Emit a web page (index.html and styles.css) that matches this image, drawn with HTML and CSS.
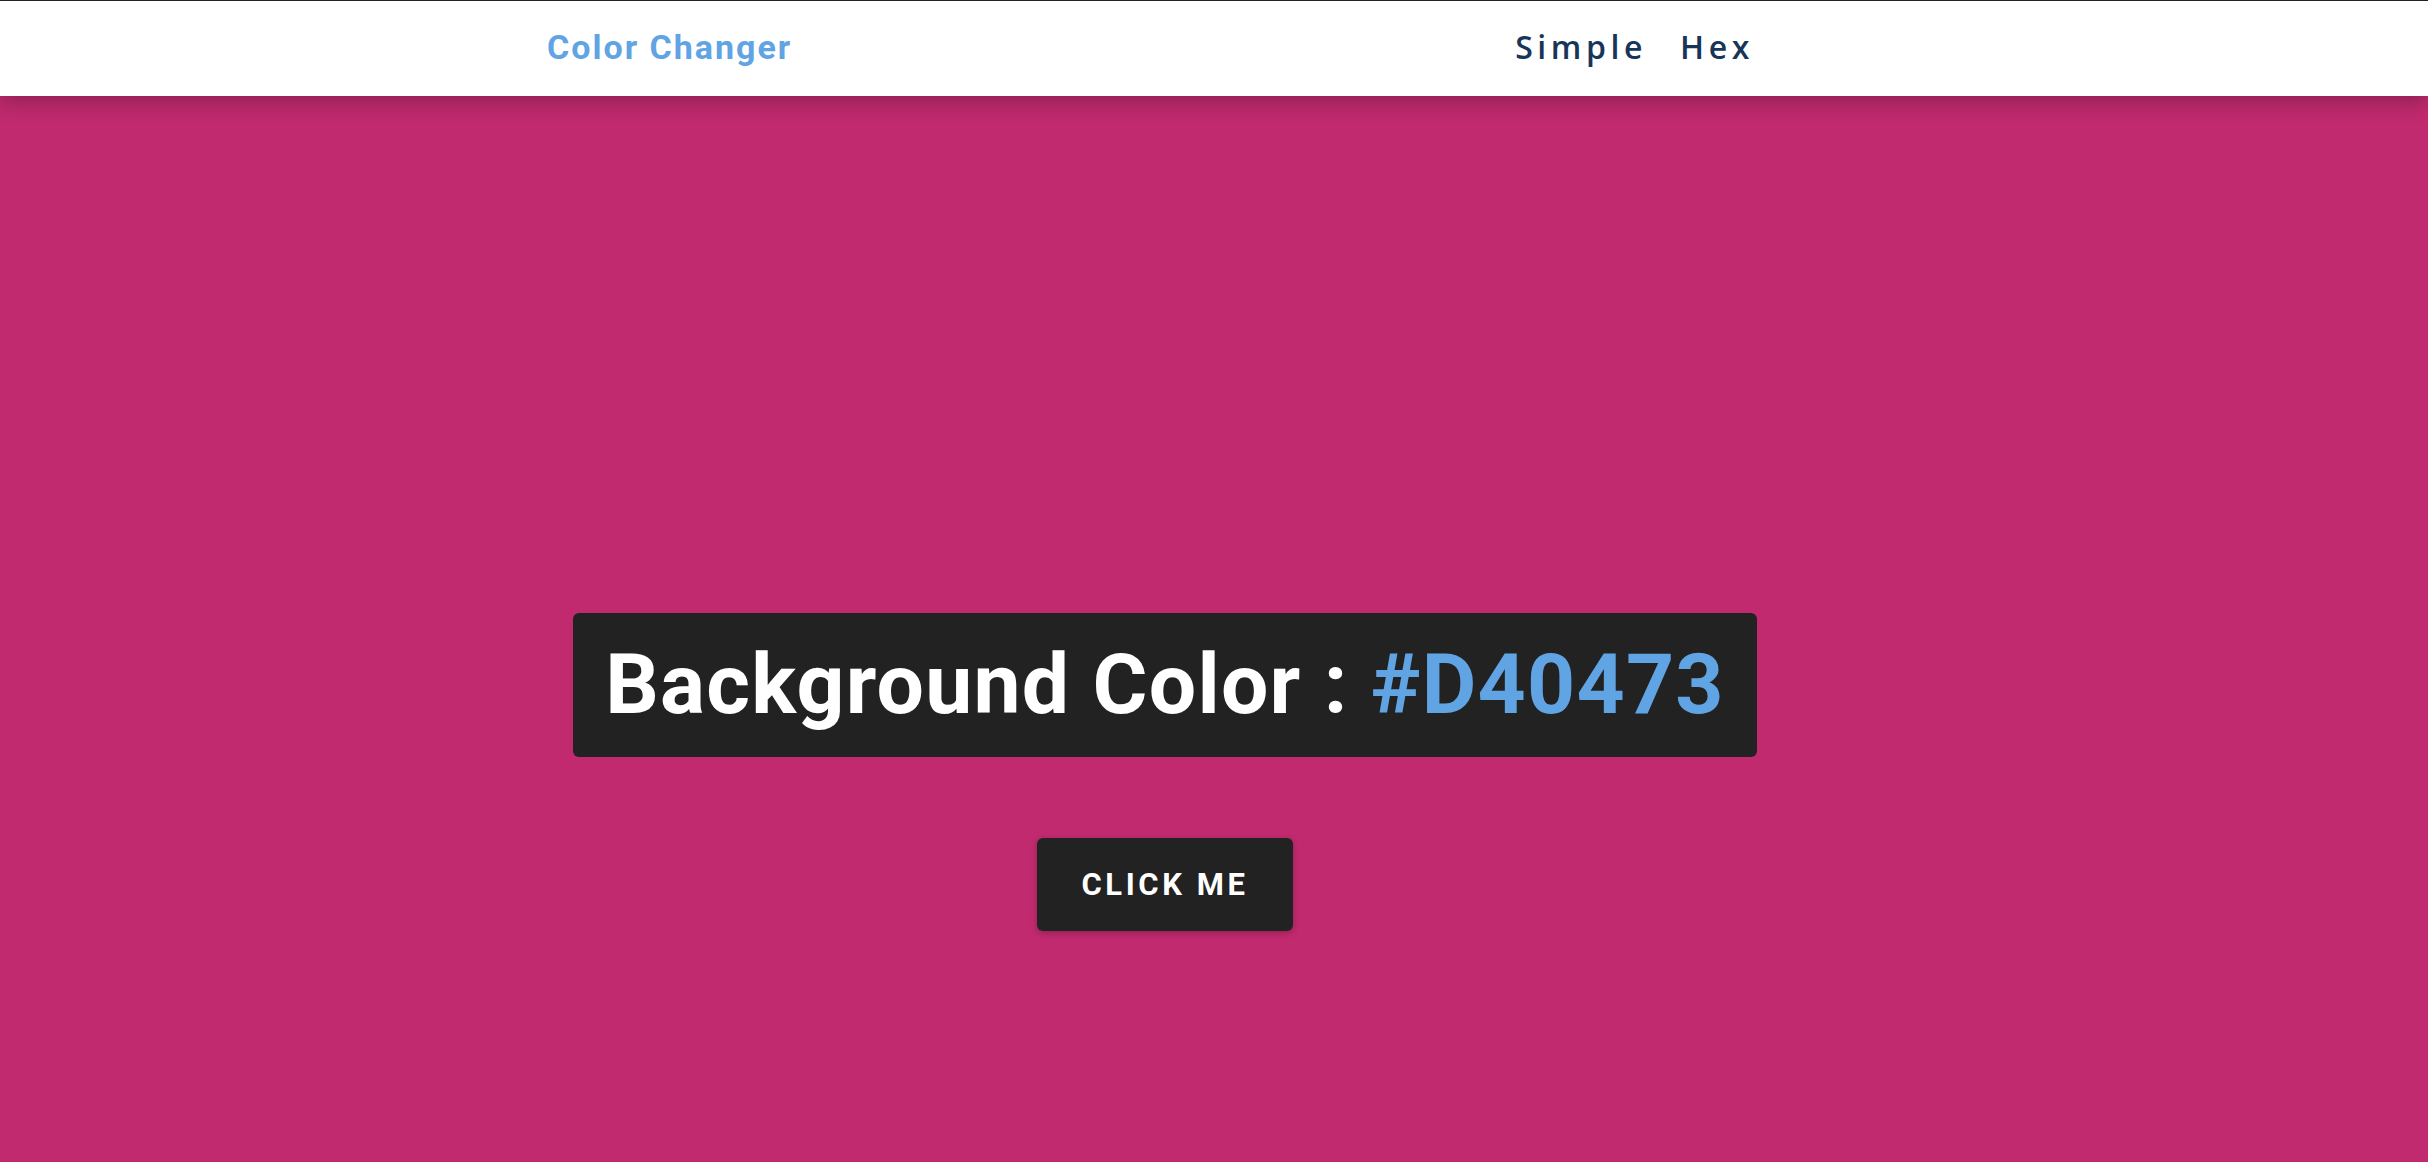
FILE: index.html
```html
<!DOCTYPE html>
<html>
<head>
<meta charset="utf-8">
<link rel="stylesheet" href="styles.css">
</head>
<body>
<nav class="nav">
  <div class="nav-inner">
    <a class="brand">Color Changer</a>
    <ul class="links">
      <li><a>Simple</a></li>
      <li><a>Hex</a></li>
    </ul>
  </div>
</nav>
<main class="main">
  <h1 class="title">Background Color : <span class="hex">#D40473</span></h1>
  <button class="btn">CLICK ME</button>
</main>
</body>
</html>
```
FILE: styles.css
```css
html, body {
  margin: 0;
  padding: 0;
  height: 100%;
}
body {
  background: #c12a6e;
  font-family: Roboto, "Liberation Sans", sans-serif;
  overflow: hidden;
}
.nav {
  position: relative;
  z-index: 2;
  height: 95px;
  background: #fff;
  border-top: 1px solid #222;
  box-shadow: 0 5px 20px rgba(0,0,0,0.28);
}
.nav-inner {
  display: flex;
  align-items: center;
  justify-content: space-between;
  height: 100%;
  box-sizing: border-box;
  padding-left: 547px;
  padding-right: 674px;
  padding-bottom: 4px;
}
.brand {
  font-family: Roboto, sans-serif;
  font-weight: 700;
  font-size: 34px;
  letter-spacing: 2px;
  color: #61a4e4;
}
.links {
  display: flex;
  gap: 33px;
  list-style: none;
  margin: 0;
  padding: 0;
}
.links a {
  font-family: "Open Sans", sans-serif;
  font-weight: 600;
  font-size: 32px;
  letter-spacing: 4.6px;
  color: #173558;
}
.main {
  display: flex;
  flex-direction: column;
  align-items: center;
  padding-top: 517px;
  padding-right: 98px;
}
.title {
  margin: 0;
  background: #222;
  color: #fff;
  border-radius: 6px;
  font-weight: 700;
  font-size: 84px;
  letter-spacing: 1.25px;
  line-height: 144px;
  padding: 0 32px;
}
.hex {
  color: #61a4e4;
}
.btn {
  margin-top: 81px;
  width: 256px;
  height: 93px;
  border: none;
  border-radius: 6px;
  background: #222;
  color: #fff;
  font-family: Roboto, sans-serif;
  font-weight: 700;
  font-size: 31px;
  letter-spacing: 3.6px;
  box-shadow: 0 2px 6px rgba(0,0,0,0.25);
}
```
